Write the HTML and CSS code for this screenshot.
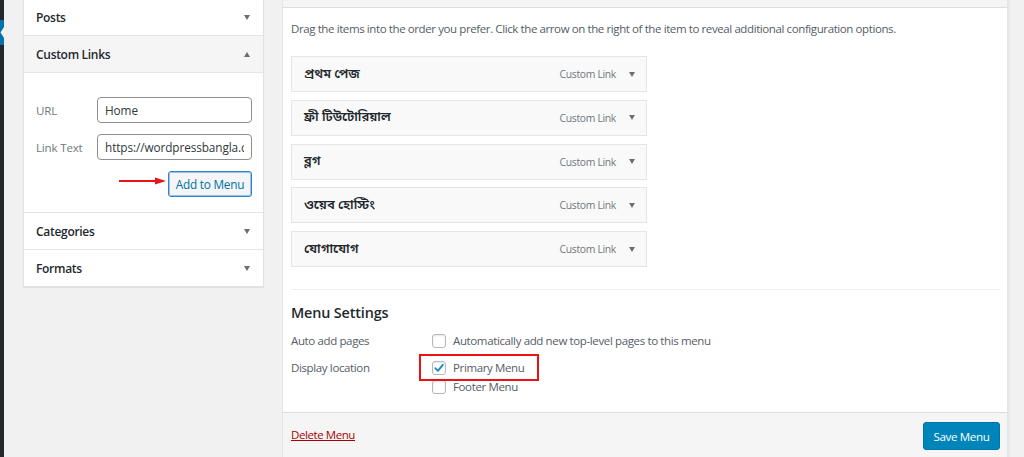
FILE: index.html
```html
<!DOCTYPE html>
<html lang="en">
<head>
<meta charset="utf-8">
<title>Menus</title>
<link rel="stylesheet" href="styles.css">
</head>
<body>
<div class="adminbar">
  <div class="current">
    <svg width="4" height="25" viewBox="0 0 4 25"><rect width="4" height="25" fill="#0073aa"/><polygon points="4,7 0.5,12.5 4,18" fill="#f1f1f1"/></svg>
  </div>
</div>

<aside class="sidebar">
  <div class="accordion">
    <div class="acc-head"><span>Posts</span><span class="tri down"></span></div>
    <div class="acc-head open"><span>Custom Links</span><span class="tri up"></span></div>
    <div class="acc-body">
      <div class="field"><label>URL</label><input class="txt" type="text" value="Home"></div>
      <div class="field"><label>Link Text</label><input class="txt" type="text" value="https://wordpressbangla.com"></div>
      <div class="btn-row">
        <span class="red-arrow"><svg width="48" height="8" viewBox="0 0 48 8"><line x1="0" y1="4" x2="38" y2="4" stroke="#e8141b" stroke-width="2"/><polygon points="36,0.5 47,4 36,7.5" fill="#e8141b"/></svg></span>
        <button class="btn-secondary">Add to Menu</button>
      </div>
    </div>
    <div class="acc-head"><span>Categories</span><span class="tri down"></span></div>
    <div class="acc-head last"><span>Formats</span><span class="tri down"></span></div>
  </div>
</aside>

<main class="menu-edit">
  <div class="menu-head"></div>
  <div class="menu-body">
    <p class="instr">Drag the items into the order you prefer. Click the arrow on the right of the item to reveal additional configuration options.</p>
    <ul class="items">
      <li class="item"><span class="title">প্রথম পেজ</span><span class="type">Custom Link</span><span class="tri small"></span></li>
      <li class="item"><span class="title">ফ্রী টিউটোরিয়াল</span><span class="type">Custom Link</span><span class="tri small"></span></li>
      <li class="item"><span class="title">ব্লগ</span><span class="type">Custom Link</span><span class="tri small"></span></li>
      <li class="item"><span class="title">ওয়েব হোস্টিং</span><span class="type">Custom Link</span><span class="tri small"></span></li>
      <li class="item"><span class="title">যোগাযোগ</span><span class="type">Custom Link</span><span class="tri small"></span></li>
    </ul>
    <div class="divider"></div>
    <h3 class="settings-title">Menu Settings</h3>
    <div class="settings">
      <div class="label">Auto add pages</div>
      <div class="opts">
        <label class="opt"><span class="cb"></span>Automatically add new top-level pages to this menu</label>
      </div>
      <div class="label">Display location</div>
      <div class="opts">
        <label class="opt"><span class="cb checked"><svg width="12" height="12" viewBox="0 0 12 12"><path d="M2.3 6.2 L4.9 8.8 L9.8 2.8" fill="none" stroke="#1e8cbe" stroke-width="1.9" stroke-linecap="round" stroke-linejoin="round"/></svg></span>Primary Menu</label>
        <label class="opt"><span class="cb"></span>Footer Menu</label>
      </div>
      <div class="highlight"></div>
    </div>
  </div>
  <div class="menu-foot">
    <a class="delete" href="#">Delete Menu</a>
    <button class="btn-primary">Save Menu</button>
  </div>
</main>
<div class="scrollgap"></div>
</body>
</html>
```

FILE: styles.css
```css
* { box-sizing: border-box; }
html, body { margin: 0; padding: 0; }
body {
  width: 1024px;
  height: 457px;
  overflow: hidden;
  display: flex;
  align-items: flex-start;
  background: #f1f1f1;
  font-family: "Open Sans", "Liberation Sans", sans-serif;
  font-size: 12px;
  color: #444;
}

.adminbar {
  width: 4px;
  height: 457px;
  background: #23282d;
  flex: none;
  padding-top: 20px;
}
.current svg { display: block; }

/* sidebar */
.sidebar {
  width: 260px;
  flex: none;
  padding-left: 19px;
}
.accordion {
  margin-top: -2px;
  width: 241px;
  background: #fff;
  border: 1px solid #e1e1e1;
  box-shadow: 0 1px 1px rgba(0,0,0,0.06);
}
.acc-head {
  height: 37px;
  border-bottom: 1px solid #e5e5e5;
  display: flex;
  align-items: center;
  justify-content: space-between;
  padding: 0 13px 0 12px;
  font-size: 12px;
  letter-spacing: -0.3px;
  font-weight: 600;
  color: #23282d;
  background: #fff;
}
.acc-head.open { background: #f5f5f5; }
.acc-head.last { border-bottom: 0; height: 36px; }
.tri {
  width: 0; height: 0;
  border-left: 3.5px solid transparent;
  border-right: 3.5px solid transparent;
}
.tri.down { border-top: 5px solid #6a6e72; }
.tri.up { border-bottom: 5px solid #6a6e72; }
.acc-body {
  height: 140px;
  border-bottom: 1px solid #e5e5e5;
  padding: 24px 11px 0 12px;
}
.field {
  display: flex;
  align-items: center;
  height: 26px;
  margin-bottom: 11px;
}
.field label {
  width: 61px;
  flex: none;
  color: #72777c;
  font-size: 11.6px;
  letter-spacing: -0.2px;
}
.txt {
  width: 155px;
  height: 26px;
  border: 1px solid #8c8f94;
  border-radius: 4px;
  padding: 0 7px;
  font-family: inherit;
  font-size: 11.8px;
  letter-spacing: -0.1px;
  color: #32373c;
  background: #fff;
  outline: none;
}
.btn-row {
  display: flex;
  justify-content: flex-end;
  align-items: center;
  position: relative;
  height: 26px;
}
.red-arrow {
  position: absolute;
  left: 83px;
  top: 6px;
  line-height: 0;
}
.btn-secondary {
  width: 84px;
  height: 26px;
  border: 1px solid #3582c4;
  border-radius: 3px;
  background: #f3f5f6;
  color: #0071a1;
  font-family: inherit;
  font-size: 11.8px;
  letter-spacing: -0.25px;
  padding: 0;
  box-shadow: 0 0 0 1px #9ec2e6 inset;
}

/* main */
.menu-edit {
  width: 726px;
  flex: none;
  margin-left: 18px;
  height: 457px;
  border-left: 1px solid #e5e5e5;
  border-right: 1px solid #e5e5e5;
  display: flex;
  flex-direction: column;
}
.menu-head {
  height: 8px;
  background: #f5f5f5;
  border-bottom: 1px solid #dedede;
  flex: none;
}
.menu-body {
  height: 404px;
  background: #fff;
  padding: 0 7px 0 8px;
  flex: none;
}
.instr {
  margin: 12px 0 0;
  line-height: 18px;
  font-size: 11.5px;
  letter-spacing: -0.4px;
  color: #555d66;
}
.items {
  list-style: none;
  margin: 18px 0 0;
  padding: 0;
  width: 356px;
}
.item {
  height: 36px;
  margin-bottom: 7.75px;
  border: 1px solid #e5e5e5;
  background: #f9f9f9;
  display: flex;
  align-items: center;
  padding: 0 11px 0 12px;
}
.item:last-child { margin-bottom: 0; }
.item .title {
  flex: 1;
  font-family: "Noto Sans Bengali", "Noto Serif Bengali", "Lohit Bengali", "FreeSerif", serif;
  font-size: 13px;
  font-weight: 600;
  color: #23282d;
}
.item .type {
  font-size: 10.4px;
  letter-spacing: -0.32px;
  color: #72777c;
  margin-right: 13px;
}
.tri.small { border-top: 5px solid #6a6e72; }

.divider {
  margin-top: 22px;
  height: 1px;
  background: #eee;
}
.settings-title {
  margin: 13px 0 0;
  line-height: 20px;
  font-size: 14.4px;
  letter-spacing: -0.15px;
  font-weight: 600;
  color: #23282d;
}
.settings {
  position: relative;
  margin-top: 8px;
  display: grid;
  grid-template-columns: 141px 1fr;
  row-gap: 8px;
  color: #555d66;
  font-size: 11.5px;
  letter-spacing: -0.37px;
}
.label { line-height: 19px; }
.opts { display: flex; flex-direction: column; }
.opt {
  display: flex;
  align-items: center;
  height: 19px;
}
.cb {
  width: 14px;
  height: 14px;
  border: 1px solid #b4b9be;
  border-radius: 3px;
  background: #fff;
  box-shadow: inset 0 1px 2px rgba(0,0,0,0.1);
  margin-right: 7px;
  display: flex;
  align-items: center;
  justify-content: center;
  flex: none;
}
.cb svg { display: block; }
.highlight {
  position: absolute;
  left: 128px;
  top: 23px;
  width: 120px;
  height: 27px;
  border: 2px solid #ee1111;
}

.menu-foot {
  flex: 1;
  background: #f5f5f5;
  border-top: 1px solid #dedede;
  display: flex;
  justify-content: space-between;
  align-items: flex-start;
  padding: 9px 7px 0 8px;
}
.delete {
  color: #a00;
  font-size: 11.5px;
  letter-spacing: -0.42px;
  margin-top: 5px;
  text-decoration: underline;
}
.btn-primary {
  width: 77px;
  height: 28px;
  background: #0085ba;
  border: 1px solid #0073aa;
  border-radius: 3px;
  color: #fff;
  font-family: inherit;
  font-size: 11.6px;
  letter-spacing: -0.38px;
  padding: 0;
}
.scrollgap {
  flex: 1;
  height: 457px;
  border-left: 2px solid #e8e8e8;
  background: #f1f1f1;
}
```
